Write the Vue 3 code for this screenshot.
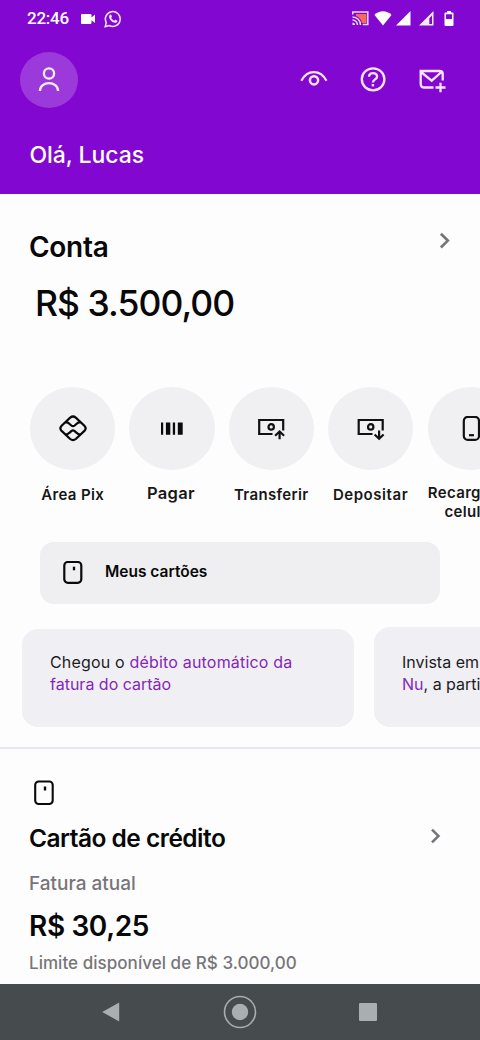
<script setup>
const actions = [
  { id: 'pix', label: 'Área Pix', cls: 'pix' },
  { id: 'pay', label: 'Pagar', cls: 'pay' },
  { id: 'send', label: 'Transferir', cls: 'send' },
  { id: 'deposit', label: 'Depositar', cls: 'deposit' },
  { id: 'phone', label: 'Recarga de celular', cls: 'phone' }
]
</script>

<template>
  <div class="screen">
    <header class="header">
      <div class="status">
        <span class="clock">22:46</span>
        <svg class="cam" width="14" height="10" viewBox="0 0 14 10"><path d="M1 0h8.500q1 0 1 1v2.600L14 .6v8.400l-3.500-2.800V9q0 1-1 1H1q-1 0-1-1V1q0-1 1-1z" fill="#fff" /></svg>
        <svg class="wa" width="18" height="18" viewBox="0 0 18 18" fill="none"><path d="M1.200 16.600l1.100-4A7.400 7.400 0 1 1 5.200 15.500z" stroke="#fbeaff" stroke-width="1.500" /><path d="M5.600 5.100c.7-.9 1.400-.8 1.700 0l.6 1.400c.1.5-.5.9-.7 1.300.7 1.400 1.700 2.300 3 2.900.5-.3.8-1.200 1.300-1l1.600.8c.6.4 0 1.500-.6 1.900-1.700 1-4.200-.4-5.500-1.700-1.500-1.500-2.700-3.800-1.400-5.600z" fill="#fbeaff" /></svg>
        <div class="signals">
          <svg width="17" height="15" viewBox="0 0 17 15" fill="none"><path d="M4 3h10.500v9H10C9 8 7 6 4 5z" fill="#f56a5b" /><path d="M.8 3.500V1h15v12.500h-5" stroke="#eadcf5" stroke-width="1.500" /><path d="M.5 6a8 8 0 0 1 8 8M.5 9a5 5 0 0 1 5 5" stroke="#eadcf5" stroke-width="1.400" /><path d="M.5 11.500a2.500 2.500 0 0 1 2.500 2.500H.5z" fill="#eadcf5" /></svg>
          <svg width="18" height="15" viewBox="0 0 18 15"><path d="M.5 4C5-1 13-1 17.500 4L9 14.500z" fill="#fff" /></svg>
          <svg width="15" height="15" viewBox="0 0 15 15"><path d="M14.500 0v14.500H0z" fill="#fff" /></svg>
          <svg width="15" height="15" viewBox="0 0 15 15"><path fill-rule="evenodd" d="M14.500 0v14.500H0zM13 4.500l-2.700 2.700V13H13z" fill="#f6eaff" /></svg>
          <svg width="10" height="15" viewBox="0 0 10 15"><path fill-rule="evenodd" d="M3 0h4v1.500h1.500q1 0 1 1V14q0 1-1 1h-7q-1 0-1-1V2.500q0-1 1-1H3zM2 3.200V8h6V3.200z" fill="#fff" /></svg>
        </div>
      </div>
      <div class="toolbar">
        <div class="avatar">
          <svg width="24" height="28" viewBox="0 0 24 28" fill="none" stroke="#ffeefe" stroke-width="2.300"><circle cx="12" cy="7.500" r="5.100" /><path d="M2.900 25c.2-10.500 18-10.500 18.200 0" /></svg>
        </div>
        <div class="tools">
          <svg width="32" height="32" viewBox="298 64 32 32" fill="none" stroke="#fbe4ff" stroke-width="2.200"><path d="M301.300 80.800c6-11.600 19.200-11.600 25.200 0" /><circle cx="314" cy="80.300" r="4.100" stroke-width="2.500" /></svg>
          <svg width="32" height="32" viewBox="357 64 32 32" fill="none" stroke="#fbe4ff" stroke-width="2.300"><ellipse cx="373.100" cy="79.300" rx="11.300" ry="11" /><path d="M369 76.700c.2-4.800 8.100-4.600 8.100-.3 0 3-4.200 2.900-4.200 6.100" /><path d="M372.900 84v2.400" stroke-width="2.400" /></svg>
          <svg width="32" height="32" viewBox="416 64 32 32" fill="none" stroke="#fbe4ff" stroke-width="2.300"><path d="M433.500 87.500h-9q-3.800 0-3.800-3.800V71h19q3 0 3 3v6.500M421 72l10.700 8.700L441.500 72M435.500 87.500h10M440.500 82.700v9.600" /></svg>
        </div>
      </div>
      <div class="hello"><span>Olá, Lucas</span></div>
    </header>

    <main>
      <section class="account">
        <div class="title-row">
          <h1>Conta</h1>
          <svg class="chev" width="14" height="20" viewBox="0 0 14 20"><path d="M2.900 3.700l6.900 6.900-6.900 6.900" fill="none" stroke="#77757a" stroke-width="2.700" /></svg>
        </div>
        <div class="balance"><span>R$ 3.500,00</span></div>
      </section>

      <nav class="actions">
        <div v-for="a in actions" :key="a.id" class="action" :class="a.cls">
          <div class="disc">
            <svg v-if="a.id === 'pix'" width="28" height="28" viewBox="0 0 28 28" fill="none" stroke="#080808" stroke-width="2.200" stroke-linejoin="round"><path d="M11.200 2.600q2.800-2.200 5.600 0l8.600 8.100q2.500 2.700 0 5.200l-8.600 8.100q-2.800 2.200-5.600 0l-8.600-8.100q-2.500-2.500 0-5.200z" /><path d="M6.500 7.100c2 0 3 .6 4.200 1.900l1.600 1.500q1.700 1.300 3.400 0l1.600-1.500c1.200-1.300 2.200-1.900 4.200-1.900M6.500 19.500c2 0 3-.6 4.200-1.900l1.600-1.500q1.700-1.300 3.400 0l1.600 1.500c1.200 1.300 2.200 1.900 4.200 1.900" /></svg>
            <svg v-else-if="a.id === 'pay'" width="24" height="14" viewBox="0 0 24 14" fill="#0b0b0b"><path d="M1 .5h2.200v12.200H1zM5.900 .5h4.400v12.200H5.900zM12.800 .5h2.300v12.200h-2.300zM17.800 .5h4.900v12.200h-4.900z" /></svg>
            <svg v-else-if="a.id === 'send'" width="28" height="24" viewBox="0 0 28 24" fill="none" stroke="#111" stroke-width="2.200"><path d="M15.500 17H2.200v-14h24v10.500" /><circle cx="14.200" cy="9.900" r="2.700" /><path d="M22.600 22.200v-7.500M18.100 18.700l4.500-4.200 4.500 4.200" /></svg>
            <svg v-else-if="a.id === 'deposit'" width="28" height="24" viewBox="0 0 28 24" fill="none" stroke="#111" stroke-width="2.200"><path d="M15.500 17H1.700v-14h24v10.500" /><circle cx="13.700" cy="9.900" r="2.700" /><path d="M22.100 13.500v8M17.600 17.500l4.500 4.200 4.500-4.200" /></svg>
            <svg v-else width="18" height="26" viewBox="0 0 18 26" fill="none" stroke="#111" stroke-width="2.200"><rect x="1.800" y=".9" width="15.200" height="23" rx="4" /><path d="M7 19.200h5" /></svg>
          </div>
          <div class="label"><span>{{ a.label }}</span></div>
        </div>
      </nav>

      <div class="cards-button">
        <svg width="20" height="24" viewBox="0 0 20 24" fill="none" stroke="#0a0a0a"><rect x="1.300" y="1" width="17" height="20.800" rx="3.500" stroke-width="2.200" /><path d="M11 5.700v3.600" stroke-width="2.300" /></svg>
        <span>Meus cartões</span>
      </div>

      <div class="tips">
        <div class="tip"><p class="t1">Chegou o <em>débito automático da</em></p><p><em>fatura do cartão</em></p></div>
        <div class="tip second"><p>Invista em ações</p><p><em>Nu</em>, a partir de R$ 1</p></div>
      </div>

      <section class="credit">
        <svg class="card-icon" width="20" height="26" viewBox="0 0 20 26" fill="none" stroke="#0a0a0a"><rect x="1.200" y="1.500" width="17.500" height="22.500" rx="3.500" stroke-width="2.100" /><path d="M11 6.500v4" stroke-width="2.400" /></svg>
        <div class="credit-row">
          <h2>Cartão de crédito</h2>
          <svg class="chev" width="14" height="18" viewBox="0 0 14 18"><path d="M3 2.600l6.500 6.400L3 15.400" fill="none" stroke="#77757a" stroke-width="2.500" /></svg>
        </div>
        <div class="bill"><span>Fatura atual</span></div>
        <div class="value"><span>R$ 30,25</span></div>
        <div class="limit"><span>Limite disponível de R$ 3.000,00</span></div>
      </section>
    </main>

    <footer class="navbar">
      <svg width="20" height="22" viewBox="0 0 20 22"><path d="M1.200 11L18.200 1.500v19z" fill="#a9aeb0" /></svg>
      <svg width="34" height="34" viewBox="0 0 34 34"><circle cx="17" cy="17" r="15.500" fill="none" stroke="#a9aeb0" stroke-width="1.600" /><circle cx="17" cy="17" r="8.200" fill="#a9aeb0" /></svg>
      <svg width="18" height="18" viewBox="0 0 18 18"><rect width="18" height="18" rx="1" fill="#a9aeb0" /></svg>
    </footer>
  </div>
</template>

<style>
html,
body {
  margin: 0;
  overflow: hidden;
}
</style>

<style scoped>
.screen {
  width: 480px;
  height: 1040px;
  overflow: hidden;
  display: flex;
  flex-direction: column;
  background: #fdfdfd;
  color: #080808;
  font-family: Inter, "Liberation Sans", sans-serif;
  white-space: nowrap;
}
svg { display: block; flex: none; }
h1, h2, p { margin: 0; font-weight: 500; }
em { font-style: normal; color: #8526b8; }
.header {
  box-sizing: border-box;
  height: 193.500px;
  background: #8208d1;
  color: #fff;
  flex: none;
}
.status {
  height: 37px;
  box-sizing: border-box;
  padding: 0 26px 0 27px;
  display: flex;
  align-items: center;
}
.clock {
  width: 53.500px;
  font: 500 17px/37px Roboto, sans-serif;
  letter-spacing: -0.25px;
}
.wa { margin-left: 9.500px; }
.signals { margin-left: auto; display: flex; align-items: center; }
.signals svg:nth-child(2) { margin-left: 4.500px; }
.signals svg:nth-child(3) { margin-left: 4.500px; }
.signals svg:nth-child(4) { margin-left: 8px; }
.signals svg:nth-child(5) { margin-left: 10px; }
.toolbar {
  margin-top: 14.500px;
  padding: 0 32px 0 20px;
  height: 56px;
  display: flex;
  align-items: center;
  justify-content: space-between;
}
.avatar {
  width: 58px;
  height: 56px;
  border-radius: 50%;
  background: #9b39da;
  display: flex;
  align-items: center;
  justify-content: center;
}
.tools { display: flex; gap: 27px; }
.hello {
  margin: 32.500px 0 0 29.500px;
  font-size: 23px;
  line-height: 30px;
  font-weight: 500;
  letter-spacing: -0.050px;
}
main { flex: 1; min-height: 0; display: flex; flex-direction: column; }
.account { height: 193.500px; box-sizing: border-box; padding: 36px 28px 0 29px; flex: none; }
.title-row { display: flex; justify-content: space-between; height: 34px; }
h1 { font-size: 28px; line-height: 34px; font-weight: 600; letter-spacing: -0.300px; }
.balance { margin: 19px 0 0 6px; font-size: 35.500px; line-height: 42px; font-weight: 500; letter-spacing: -0.950px; }
.actions { display: flex; padding-left: 30px; gap: 14px; height: 155px; flex: none; }
.action { width: 85.300px; flex: none; }
.action.phone { margin-left: 1px; }
.disc {
  height: 83px;
  border-radius: 50%;
  background: #f0f0f3;
  display: flex;
  align-items: center;
  justify-content: center;
}
.label {
  margin-top: 15px;
  display: flex;
  justify-content: center;
  font-size: 15px;
  line-height: 19px;
  font-weight: 600;
  letter-spacing: 0.350px;
  color: #171717;
}
.deposit .label { letter-spacing: 0.550px; }
.pay .label { margin-top: 14px; margin-left: -2px; font-size: 16.500px; letter-spacing: 0.300px; }
.phone .label { margin-top: 13px; margin-left: -1px; white-space: normal; text-align: center; }
.cards-button {
  margin-left: 40px;
  width: 400px;
  height: 62px;
  box-sizing: border-box;
  padding-left: 23px;
  border-radius: 14px;
  background: #efeff2;
  display: flex;
  align-items: center;
  flex: none;
  font-size: 15.500px;
  font-weight: 600;
  line-height: 20px;
}
.cards-button span { margin: -3px 0 0 22px; }
.tips { display: flex; gap: 20px; margin: 25px 0 0 22px; flex: none; }
.tip {
  width: 332px;
  height: 98px;
  box-sizing: border-box;
  flex: none;
  padding: 22px 0 0 28px;
  border-radius: 16px;
  background: #f0f0f4;
  font-size: 16px;
  line-height: 22.300px;
  color: #1c1c1f;
}
.tip p { font-weight: 400; }
.tip .t1 { letter-spacing: 0.180px; }
.tip.second { margin-top: -2px; height: 100px; padding-top: 24px; }
.credit {
  margin-top: 20px;
  border-top: 2px solid #e8e6ec;
  padding: 31px 37px 0 29px;
  flex: 1;
}
.card-icon { margin-left: 5px; }
.credit-row { margin-top: 17px; height: 30px; display: flex; justify-content: space-between; align-items: center; }
.credit-row .chev { margin-top: -4px; }
h2 { font-size: 24.500px; line-height: 30px; font-weight: 600; letter-spacing: -0.520px; }
.bill { margin-top: 18.500px; font-size: 19px; line-height: 24px; font-weight: 500; color: #77757a; }
.value { margin-top: 13.500px; font-size: 28px; line-height: 34px; font-weight: 600; letter-spacing: -0.380px; }
.limit { margin-top: 8px; font-size: 17px; line-height: 24px; font-weight: 500; letter-spacing: 0.040px; color: #77757a; }
.navbar {
  height: 56px;
  flex: none;
  background: #464c4e;
  display: flex;
  align-items: center;
  padding-left: 101px;
}
.navbar svg:nth-child(2) { margin-left: 102px; }
.navbar svg:nth-child(3) { margin-left: 101.500px; }
</style>
